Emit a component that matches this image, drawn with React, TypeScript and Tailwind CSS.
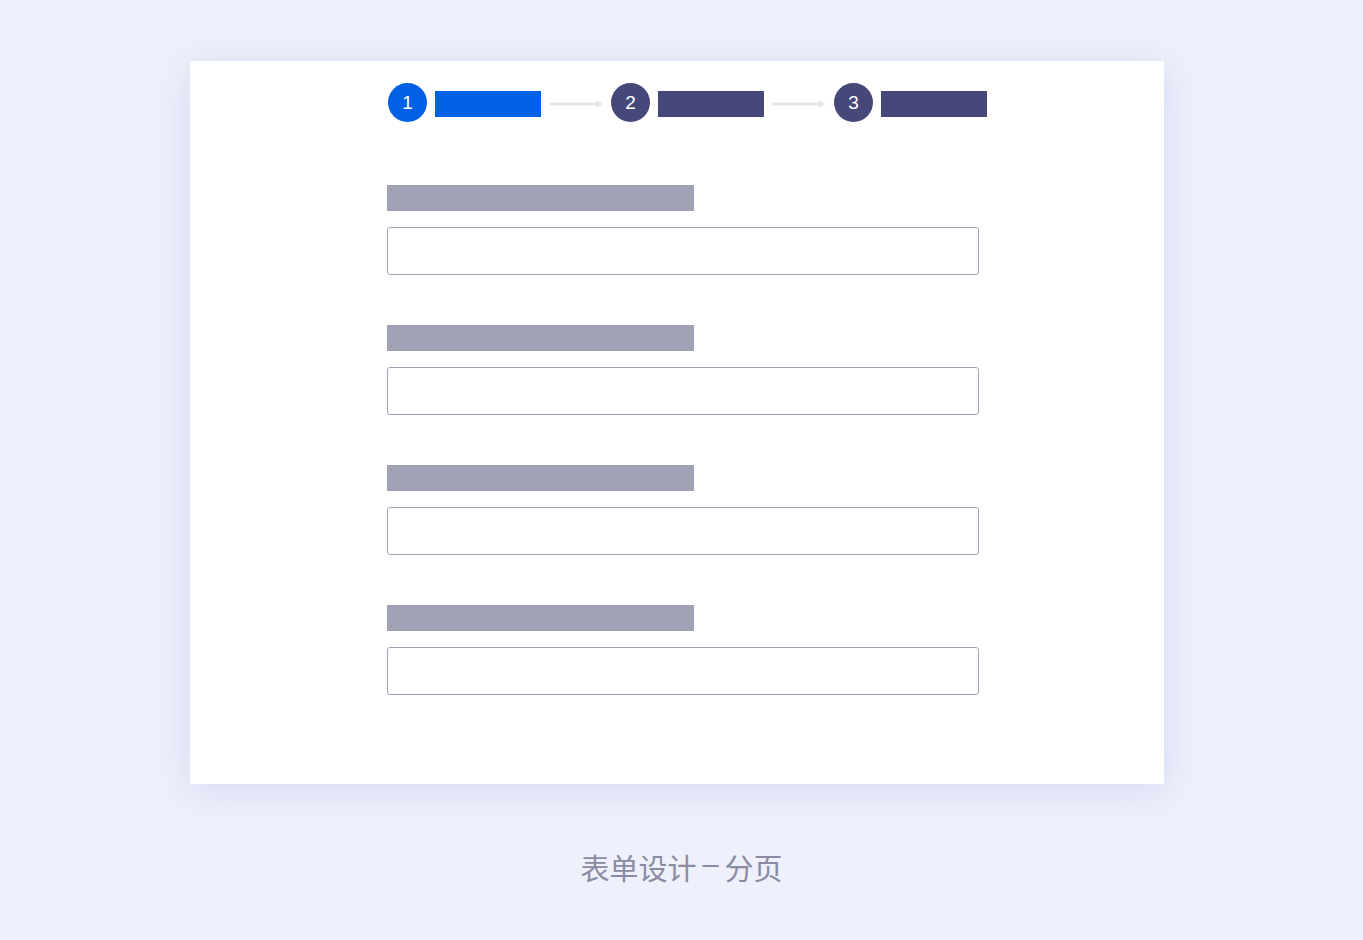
import React from 'react';

const steps = [
    { n: 1, active: true },
    { n: 2, active: false },
    { n: 3, active: false },
];

const Arrow: React.FC = () => (
    <svg className="mx-[8px] mt-[3px]" width="54" height="8" viewBox="0 0 54 8">
        <rect x="0" y="2.5" width="48" height="3" fill="#e6e6e8" />
        <path d="M47 0 L54 4 L47 8 Z" fill="#e6e6e8" />
    </svg>
);

export default function App() {
    return (
        <div className="min-h-[940px] bg-[#eef0fb] pt-[61px] font-['Liberation_Sans','Noto_Sans_CJK_SC',sans-serif]">
            <div className="ml-[190px] w-[974px] h-[723px] bg-white shadow-[0_6px_36px_rgba(90,100,190,0.16)] pl-[197px] pt-[22px]">
                <div className="flex items-center ml-px">
                    {steps.map((s, i) => (
                        <React.Fragment key={s.n}>
                            {i > 0 && <Arrow />}
                            <div
                                className={`w-[39px] h-[39px] rounded-full flex items-center justify-center text-white text-[19px] pt-px ${
                                    s.active ? 'bg-[#0060e6]' : 'bg-[#46487a]'
                                }`}
                            >
                                {s.n}
                            </div>
                            <div
                                className={`ml-[8px] mt-[3px] w-[106px] h-[26px] ${
                                    s.active ? 'bg-[#0060e6]' : 'bg-[#46487a]'
                                }`}
                            />
                        </React.Fragment>
                    ))}
                </div>
                <div className="mt-[63px] flex flex-col gap-[50px]">
                    {[0, 1, 2, 3].map((k) => (
                        <div key={k} className="flex flex-col gap-[16px]">
                            <div className="w-[307px] h-[26px] bg-[#a1a2b5]" />
                            <div className="w-[592px] h-[48px] border border-[#a1a2b5] rounded-[3px] bg-white" />
                        </div>
                    ))}
                </div>
            </div>
            <div className="mt-[64px] text-center text-[29px] leading-[38px] text-[#8a8ba3] font-['Noto_Sans_CJK_SC',sans-serif]">
                表单设计<span className="mx-[6px] align-[6px] leading-[0px] font-['Liberation_Sans',sans-serif]">–</span>分页
            </div>
        </div>
    );
}
